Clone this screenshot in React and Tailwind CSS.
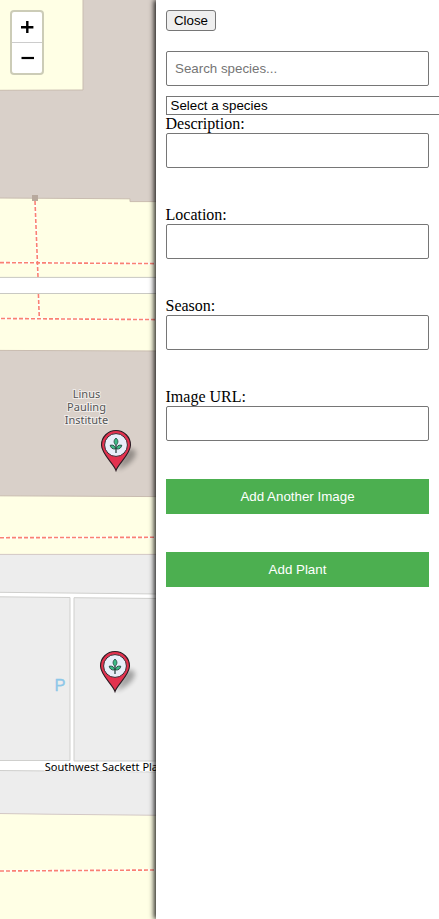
const INPUT = 'block h-[35px] w-full rounded-[2px] border border-[#767676] bg-white px-[8px] text-[13.333px] text-black outline-none placeholder:text-[#757575]';
const BUTTON = 'flex h-[35px] w-full items-center justify-center bg-[#4caf50] text-[13.333px] text-white';

function Marker({ x, y }) {
  return (
    <g transform={`translate(${x} ${y})`}>
      <path d="M1 25 L10 6 Q16 1 20 7 Q19 18 1 25Z" fill="#000" opacity="0.32" filter="url(#soft)" />
      <path
        d="M0 25.5 C-2 19 -14.5 9 -14.5 0 A14.5 14.5 0 0 1 14.5 0 C14.5 9 2 19 0 25.5Z"
        fill="#e3324f"
        stroke="#2b1c24"
        strokeWidth="1.1"
      />
      <circle r="11.4" cy="0" fill="#e8eef9" stroke="#2b1c24" strokeWidth="0.9" />
      <g fill="#3dbb85" stroke="#1d3a35" strokeWidth="0.8" strokeLinejoin="round">
        <path d="M0 8V0" fill="none" strokeWidth="1.2" />
        <path d="M0 0.3C-2.6-2 -2.5-4.8 0-7C2.5-4.8 2.6-2 0 0.3Z" />
        <path d="M-0.3 4C-3.6 4.4 -5.4 2.7 -5.8 0.2C-2.6-0.4 -0.5 1 -0.3 4Z" />
        <path d="M0.3 4C3.6 4.4 5.4 2.7 5.8 0.2C2.6-0.4 0.5 1 0.3 4Z" />
      </g>
    </g>
  );
}

function MapDrawing() {
  return (
    <svg width="156" height="919" viewBox="0 0 156 919" className="block">
      <defs>
        <filter id="soft" x="-50%" y="-50%" width="200%" height="200%">
          <feGaussianBlur stdDeviation="2.8" />
        </filter>
      </defs>
      <rect width="156" height="919" fill="#ffffe5" />
      <path d="M83-1V90L-1 90.3V198L130 198.8V201.6H158V-1Z" fill="#d9d0c9" stroke="#c9bcb0" />
      <path d="M-1 350.4L158 351V496.6L-1 495.8Z" fill="#d9d0c9" stroke="#c9bcb0" />
      <path d="M-1 277.4H158V293.5H-1Z" fill="#fff" stroke="#c9c9c3" />
      <g fill="none" stroke="#fff" strokeWidth="2.5" opacity="0.7">
        <path d="M35 200L38 277M38.4 294L39.3 318M0 262.6L156 263.6M0 318.5L156 319.6M0 537.7L156 537.3M0 871L156 870" />
      </g>
      <g fill="none" stroke="#fa8072" strokeWidth="1.6" strokeDasharray="4 2">
        <path d="M35 201L38 277M38.4 294L39.3 318" />
        <path d="M0 262.6L156 263.6" />
        <path d="M1 318.5L156 319.6" />
        <path d="M0 537.7L156 537.3" />
        <path d="M0 871L156 870" />
      </g>
      <rect x="32" y="195" width="6" height="6" fill="#b8a99d" />
      <path d="M-1 554.4H158V815.3L48 814.2L-1 813.5Z" fill="#ededed" stroke="#d3c8c5" />
      <path d="M-1 592.3L158 594V598.5L74 597.7V761H158V772L-1 770.5V760.5H70V597.5L-1 596.8Z" fill="#fff" stroke="#cfcfcd" />
      <g
        fontFamily='"Noto Sans", sans-serif'
        fontSize="11"
        textAnchor="middle"
        fill="#555"
        stroke="#fff"
        strokeOpacity="0.6"
        strokeWidth="2"
        paintOrder="stroke"
      >
        <text x="86.5" y="398">Linus</text>
        <text x="86.5" y="411">Pauling</text>
        <text x="86.5" y="424">Institute</text>
      </g>
      <text x="54.5" y="691" fontFamily='"Liberation Sans", sans-serif' fontSize="16.5" fill="#8dc7e8" stroke="#8dc7e8" strokeWidth="0.3">P</text>
      <text x="44.8" y="771" fontFamily='"Noto Sans", sans-serif' fontSize="11" fill="#000" stroke="#fff" strokeOpacity="0.6" strokeWidth="2" paintOrder="stroke">
        Southwest Sackett Place
      </text>
      <Marker x={116} y={445} />
      <Marker x={115} y={666} />
    </svg>
  );
}

function ZoomControl() {
  return (
    <div className="absolute top-[10px] left-[10px] w-[34px] rounded-[4px] border-2 border-black/20 bg-white bg-clip-padding">
      <button aria-label="Zoom in" className="flex h-[31px] w-full items-center justify-center border-b border-[#ccc]">
        <svg width="14" height="14" viewBox="0 0 14 14"><path d="M7.3 1V13M1 7.2H13.4" stroke="#000" strokeWidth="2.4" /></svg>
      </button>
      <button aria-label="Zoom out" className="flex h-[30px] w-full items-center justify-center">
        <svg width="14" height="14" viewBox="0 0 14 14"><path d="M1.5 7H14" stroke="#000" strokeWidth="2.2" /></svg>
      </button>
    </div>
  );
}

function Field({ label }) {
  return (
    <label className="mb-[38px] block text-[16px] leading-[18px]">
      <span className="-ml-[0.5px] block font-['Liberation_Serif','Times_New_Roman',serif]">{label}</span>
      <input type="text" className={INPUT} />
    </label>
  );
}

export default function App() {
  return (
    <div className="flex h-[919px] w-[439px] overflow-hidden bg-white font-['Liberation_Sans',Arial,sans-serif] text-black">
      <div className="relative w-[156px] shrink-0">
        <MapDrawing />
        <ZoomControl />
      </div>
      <aside className="relative w-[283px] shrink-0 bg-white p-[10px] shadow-[-2px_0_5px_rgba(0,0,0,0.85)]">
        <button className="flex h-[21px] w-[50px] items-center justify-center rounded-[3px] border border-[#767676] bg-[#efefef] text-[13.333px]">
          Close
        </button>
        <input type="text" placeholder="Search species..." className={`${INPUT} mt-[20px]`} />
        <div className="mt-[10px] flex h-[19px] w-[320px] items-center border border-[#767676] bg-white pl-[3.5px] text-[13.333px]">
          Select a species
        </div>
        <Field label="Description:" />
        <Field label="Location:" />
        <Field label="Season:" />
        <Field label="Image URL:" />
        <button className={BUTTON}>Add Another Image</button>
        <button className={`${BUTTON} mt-[38px]`}>Add Plant</button>
      </aside>
    </div>
  );
}
